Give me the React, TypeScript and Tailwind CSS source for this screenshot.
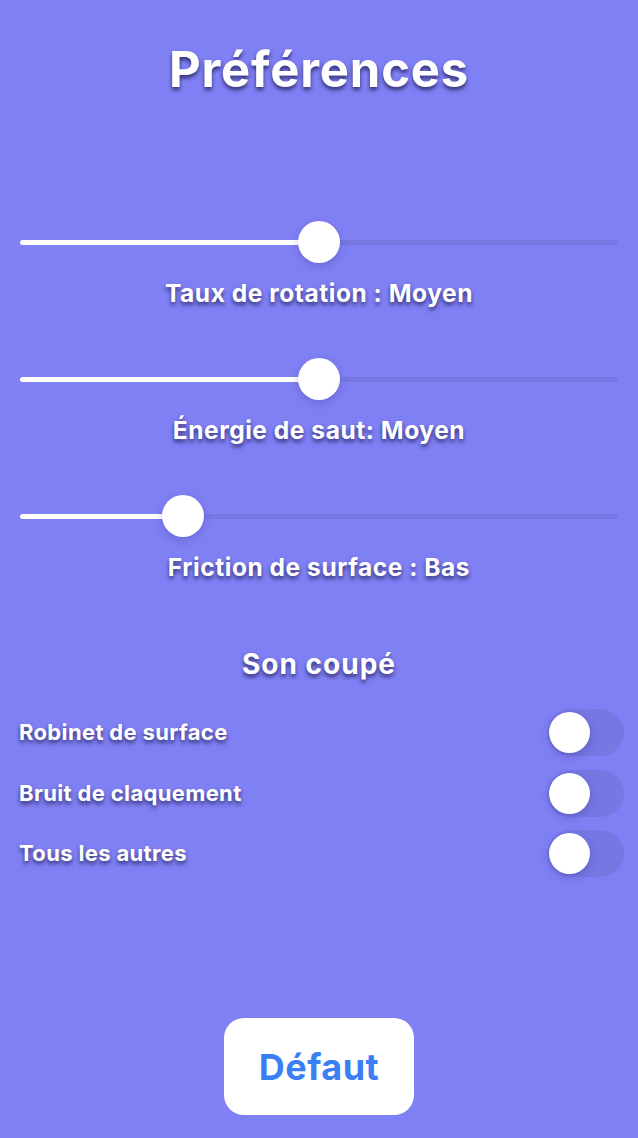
const shadow = "[text-shadow:0_3px_4px_rgba(20,20,70,0.75)]";

type SliderProps = { value: number; label: string };

function Slider({ value, label }: SliderProps) {
  return (
    <div className="flex flex-col">
      <div className="px-5">
        <div className="relative h-[42px] w-full">
          <div className="absolute left-0 right-0 top-[19px] h-[5px] rounded-full bg-[#7777e3]" />
          <div
            className="absolute left-0 top-[19px] h-[5px] rounded-full bg-white"
            style={{ width: `calc(20px + (100% - 40px) * ${value})` }}
          />
          <div
            className="absolute top-0 h-[42px] w-[42px] rounded-full bg-white shadow-[0_3px_8px_rgba(40,40,120,0.25)]"
            style={{ left: `calc((100% - 42px) * ${value})` }}
          />
        </div>
      </div>
      <p className={`mt-[15px] text-center text-[24.5px] font-bold leading-[30px] tracking-[0.55px] text-white ${shadow}`}>
        {label}
      </p>
    </div>
  );
}

function Toggle({ label }: { label: string }) {
  return (
    <div className="flex h-[47px] items-center justify-between pl-[19px] pr-[14px]">
      <span className={`text-[22px] font-bold tracking-[0.35px] text-white ${shadow}`}>{label}</span>
      <div className="relative h-[47px] w-[77px] rounded-full bg-[#7777e3]">
        <div className="absolute left-[2px] top-[3px] h-[41px] w-[41px] rounded-full bg-white shadow-[0_3px_8px_rgba(40,40,120,0.3)]" />
      </div>
    </div>
  );
}

export default function App() {
  return (
    <div className="flex h-[1138px] w-full flex-col bg-[#8080f5] font-['Inter','Liberation_Sans',sans-serif]">
      <h1 className={`mt-[45px] text-center text-[49px] font-bold leading-[50px] tracking-[0.8px] text-white ${shadow}`}>
        Préférences
      </h1>

      <div className="mt-[126px] flex flex-col gap-[50px]">
        <Slider value={0.5} label="Taux de rotation : Moyen" />
        <Slider value={0.5} label="Énergie de saut: Moyen" />
        <Slider value={0.256} label="Friction de surface : Bas" />
      </div>

      <h2 className={`mt-[65px] text-center text-[28px] font-bold leading-[34px] tracking-[1px] text-white ${shadow}`}>
        Son coupé
      </h2>

      <div className="mt-[28px] flex flex-col gap-[13.5px]">
        <Toggle label="Robinet de surface" />
        <Toggle label="Bruit de claquement" />
        <Toggle label="Tous les autres" />
      </div>

      <div className="mt-auto mb-[23px] flex justify-center">
        <button className="flex h-[97px] w-[190px] items-center justify-center rounded-[20px] bg-white text-[36px] font-bold tracking-[0.5px] text-[#3b7ff5]">
          Défaut
        </button>
      </div>
    </div>
  );
}
